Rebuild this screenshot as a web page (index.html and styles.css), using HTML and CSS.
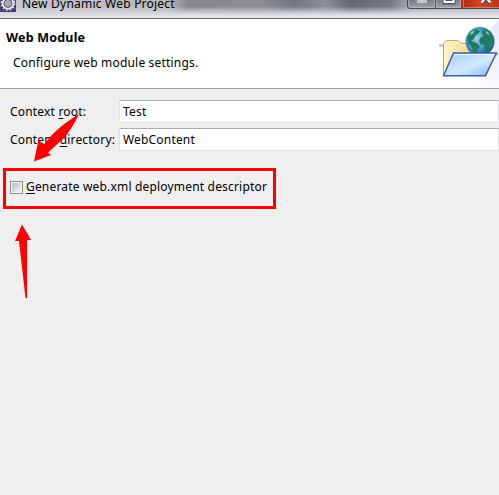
FILE: index.html
```html
<!DOCTYPE html>
<html lang="en">
<head>
<meta charset="utf-8">
<title>New Dynamic Web Project</title>
<link rel="stylesheet" href="styles.css">
</head>
<body>
<main class="dialog">
  <header class="titlebar">
    <svg class="app-icon" width="16" height="12" viewBox="0 0 16 12">
      <path fill="#4c3e78" d="M0 0h16v12H0z"/>
      <circle cx="8" cy="3.400" r="6.600" fill="none" stroke="#e7e4ee" stroke-width="1.500" stroke-dasharray="1.800 1.700"/>
      <circle cx="8" cy="3.400" r="5.200" fill="#a5a9b8" stroke="#eeecf3" stroke-width="1.800"/>
      <circle cx="8" cy="3.400" r="4" fill="none" stroke="#5b5478" stroke-width="1"/>
    </svg>
    <span class="title">New Dynamic Web Project</span>
    <svg class="controls" width="93" height="10" viewBox="0 0 93 10">
      <defs>
        <linearGradient id="gray" x2="0" y2="1"><stop stop-color="#777a80"/><stop offset="1" stop-color="#a0a2a7"/></linearGradient>
        <linearGradient id="red"><stop stop-color="#b02c12"/><stop offset=".5" stop-color="#d8401b"/><stop offset="1" stop-color="#bd3518"/></linearGradient>
      </defs>
      <path d="M1.500-1v7q0 2.500 2.500 2.500H94V-1z" fill="url(#gray)" stroke="#464950"/>
      <path d="M56 0h37v8H56z" fill="url(#red)"/>
      <path d="M2.500 0v5.500q0 2 1.500 2h24.500V0M30.500 0v7.500H54.500V0M57.500 0v7.500H93" fill="none" stroke="#d1d2d5" opacity=".45"/>
      <path d="M29.500 0v8M55.500 0v8" stroke="#515359"/>
      <path d="M11 0h10v3H11z" fill="#c4c5c8"/>
      <path d="M38.500-1h9v3.500h-9z" fill="none" stroke="#51546a" stroke-width="4"/>
      <path d="M38.500-1h9v3h-9z" fill="none" stroke="#fff" stroke-width="2"/>
      <path d="M75.500 3l4.500-5 4.500 5" fill="none" stroke="#5b4a5a" stroke-width="4.500"/>
      <path d="M75.500 2.500l4.500-5 4.500 5" fill="none" stroke="#f5edf0" stroke-width="2.500"/>
    </svg>
  </header>
  <section class="banner">
    <div class="heading">
      <h1>Web Module</h1>
      <p>Configure web module settings.</p>
    </div>
    <svg class="banner-art" width="69" height="69" viewBox="430 19 69 69">
      <defs>
        <linearGradient id="wash" x1="0" y1="1" x2="1" y2="0"><stop offset=".3" stop-color="#fff"/><stop offset="1" stop-color="#e3e8f8"/></linearGradient>
        <linearGradient id="folder"><stop stop-color="#fff3c7"/><stop offset="1" stop-color="#f4cf7e"/></linearGradient>
        <linearGradient id="flap" x2="1" y2="1"><stop stop-color="#9dccf8"/><stop offset=".55" stop-color="#d3e9ff"/><stop offset="1" stop-color="#79b6f2"/></linearGradient>
        <radialGradient id="globe" cx=".4" cy=".4" r=".65"><stop stop-color="#a2d6e8"/><stop offset=".6" stop-color="#3d91bd"/><stop offset="1" stop-color="#1d5488"/></radialGradient>
        <clipPath id="disc"><circle cx="480" cy="41.500" r="13.500"/></clipPath>
      </defs>
      <path d="M440 88L499 19v69z" fill="url(#wash)"/>
      <path d="M439 45.500h5M450 54.500h5M490 54.500h8" stroke="#b1b4bb" stroke-width="2"/>
      <path d="M443.500 75V43.500l3-3H458l3 3h18q2 0 2 2V75z" fill="url(#folder)" stroke="#d7a64d"/>
      <path d="M445 43.500l2-1.500h10.500l3 3H479" fill="none" stroke="#fff9e4"/>
      <circle cx="480" cy="41.500" r="14.500" fill="url(#globe)"/>
      <g clip-path="url(#disc)">
        <path fill="#207b65" d="M467 37l4-6 5-2 4 2-2 3-3 2-1 3-3 2 3 1 4 2 2 3-3 3-1 5-3-2-1-6-4-4zM482 31l4-2 5 4 3 5-1 5-3 1-1 5-3 3-2-2v-5l-4-1-1-4 2-3 3-1-2-2z"/>
        <path fill="#8bc5b0" d="M471 32l4-2-2 4-3 1zM485 31l3 1 2 3-3-1z"/>
      </g>
      <path d="M453.500 53H496.500L485.500 75.700H443.500z" fill="url(#flap)" stroke="#405da9" stroke-width="1.500" stroke-linejoin="round"/>
      <path d="M454.500 54.500H494" stroke="#eff8ff"/>
    </svg>
  </section>
  <form class="form">
    <div class="row">
      <label for="root">Context <u>r</u>oot:</label>
      <div class="field" id="root">Test</div>
    </div>
    <div class="row">
      <label for="dir">Content <u>d</u>irectory:</label>
      <div class="field" id="dir">WebContent</div>
    </div>
    <div class="option">
      <span class="checkbox"></span>
      <span><u>G</u>enerate web.xml deployment descriptor</span>
    </div>
  </form>
  <svg class="arrows" width="499" height="495" viewBox="0 0 499 495">
    <path fill="red" d="M79 114Q73 127 64 138L48 152.500 51 155 34 161.500 38.500 140 44 144.500Q49 137 57 130 66 122 79 114z"/>
    <path fill="red" d="M22 224.500L31 240H27V298H25.500L19 241H15z"/>
  </svg>
</main>
</body>
</html>
```
FILE: styles.css
```css
* { box-sizing: border-box; }
body { margin: 0; }
.dialog {
  position: relative;
  width: 499px;
  height: 495px;
  overflow: hidden;
  background: #efefef;
  color: #000;
  font: 12px/18px "Noto Sans", sans-serif;
  letter-spacing: .18px;
}
.titlebar {
  display: flex;
  align-items: flex-start;
  height: 19px;
  border-bottom: 1px solid #66686e;
  background:
    linear-gradient(to bottom, transparent 35%, #d9dbe1 80%, #e9eaef),
    linear-gradient(to right, #c5c8cd 0, #b5b7bb 168px, #85878c 188px, #8b8d92 260px, #75787e 295px, #8b8e93 325px, #65696f 352px, #777b81 390px, #a7a9ae 412px, #b8bac0);
}
.app-icon { flex: none; }
.title {
  margin: -5px 0 0 6px;
  letter-spacing: .22px;
  white-space: nowrap;
}
.controls { flex: none; margin-left: auto; }
.banner {
  display: flex;
  justify-content: space-between;
  height: 70px;
  background: #fff;
  border-bottom: 1px solid #a0a0a0;
}
.heading { padding: 10px 0 0 6px; }
h1 { margin: 0; font-size: 12.5px; line-height: 18px; letter-spacing: .2px; }
p { margin: 7px 0 0 7px; line-height: 18px; white-space: nowrap; }
.banner-art { flex: none; }
.form { padding-top: 11px; }
.row { display: flex; align-items: center; height: 23px; margin-bottom: 5px; padding-left: 10px; }
label { width: 109px; white-space: nowrap; }
.field {
  width: 380px;
  height: 23px;
  padding: 2px 0 0 3px;
  background: #fff;
  border: 1px solid #e2e3ea;
  border-top-color: #abadb3;
}
u { text-decoration-thickness: 1px; text-underline-offset: 2px; }
.option {
  display: flex;
  align-items: center;
  gap: 3px;
  width: 273px;
  height: 41px;
  margin: 17px 0 0 3px;
  padding: 0 0 3px 4px;
  border: 3px solid #f00;
  white-space: nowrap;
}
.checkbox {
  width: 13px;
  height: 13px;
  padding: 1px;
  border: 1px solid #8e8f8f;
  background: linear-gradient(135deg, #b9bec8, #f4f4f5) content-box, #f4f4f4;
}
.arrows { position: absolute; left: 0; top: 0; pointer-events: none; }
```
